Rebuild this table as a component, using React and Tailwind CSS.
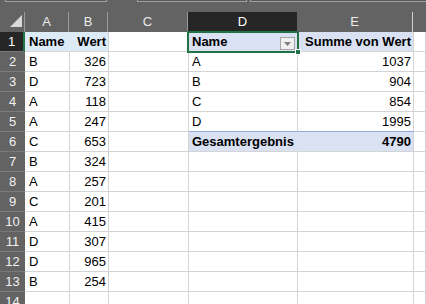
const rows = [
  { n: 1, a: 'Name', b: 'Wert', d: 'Name', e: 'Summe von Wert' },
  { n: 2, a: 'B', b: '326', d: 'A', e: '1037' },
  { n: 3, a: 'D', b: '723', d: 'B', e: '904' },
  { n: 4, a: 'A', b: '118', d: 'C', e: '854' },
  { n: 5, a: 'A', b: '247', d: 'D', e: '1995' },
  { n: 6, a: 'C', b: '653', d: 'Gesamtergebnis', e: '4790' },
  { n: 7, a: 'B', b: '324' },
  { n: 8, a: 'A', b: '257' },
  { n: 9, a: 'C', b: '201' },
  { n: 10, a: 'A', b: '415' },
  { n: 11, a: 'D', b: '307' },
  { n: 12, a: 'D', b: '965' },
  { n: 13, a: 'B', b: '254' },
  { n: 14 },
]

const cell = 'h-full border-r border-b border-[#d4d4d4] leading-[19px] whitespace-nowrap overflow-hidden'

function Row({ r }) {
  const head = r.n === 1
  const pivotHead = r.n === 1
  const pivotTotal = r.n === 6
  const beforeTotal = r.n === 5
  return (
    <div className="flex h-[20px]">
      {/* row header */}
      <div
        className={
          head
            ? 'w-[25px] h-full bg-[#262626] text-white text-center leading-[19px] border-r-2 border-r-[#217346] border-b border-b-[#7a7a7a]'
            : 'w-[25px] h-full bg-[#636363] text-[#f2f2f2] text-center leading-[19px] border-b border-b-[#7a7a7a]'
        }
      >
        {r.n}
      </div>
      <div className={`${cell} w-[45px] pl-[4px] ${head ? 'bg-[#ddebf7] font-bold border-r-[#ddebf7]' : ''}`}>{r.a}</div>
      <div className={`${cell} w-[39px] pr-[2px] text-right ${head ? 'bg-[#ddebf7] font-bold' : ''}`}>{r.b}</div>
      <div className={`${cell} w-[80px]`} />
      <div
        className={`${cell} relative w-[109px] pl-[3px] ${
          pivotHead || pivotTotal ? 'bg-[#d9e1f2] font-bold border-r-[#d9e1f2]' : ''
        } ${beforeTotal ? 'border-b-[#8ea9db]' : ''}`}
      >
        {r.d}
        {pivotHead && (
          <div className="absolute right-[2px] top-[5px] w-[15px] h-[13px] bg-[#f0f0f0] border border-[#a6a6a6] flex items-center justify-center">
            <svg width="7" height="4" viewBox="0 0 7 4">
              <polygon points="0,0 7,0 3.5,4" fill="#7f7f7f" />
            </svg>
          </div>
        )}
      </div>
      <div
        className={`${cell} w-[116px] pr-[2px] text-right ${
          pivotHead || pivotTotal ? 'bg-[#d9e1f2] font-bold' : ''
        } ${beforeTotal ? 'border-b-[#8ea9db]' : ''}`}
      >
        {r.e}
      </div>
      <div className={`${cell} flex-1`} />
    </div>
  )
}

export default function App() {
  return (
    <div className="w-[426px] h-[304px] overflow-hidden bg-white relative text-[13px] text-black font-['Liberation_Sans',Arial,sans-serif]">
      {/* top strip */}
      <div className="h-[12px] bg-[#636363] flex items-start">
        <div className="ml-[5px] w-[102px] h-[2px] bg-[#585858] border-x border-b border-[#a0a0a0]" />
        <div className="ml-[30px] w-[110px] h-[2px] bg-[#585858] border-x border-b border-[#a0a0a0]" />
        <div className="ml-[3px] flex-1 h-[2px] bg-[#585858] border-l border-b border-[#a0a0a0]" />
      </div>

      {/* column headers */}
      <div className="flex h-[20px] bg-[#636363] text-[#ececec] leading-[20px] text-center">
        <div className="w-[25px] h-full border-r border-[#9a9a9a]">
          <svg width="24" height="20" viewBox="0 0 24 20">
            <polygon points="22,3 22,15 10,15" fill="#d9d9d9" />
          </svg>
        </div>
        <div className="w-[44px] h-full border-r border-[#9a9a9a]">A</div>
        <div className="w-[39px] h-full border-r border-[#9a9a9a]">B</div>
        <div className="w-[80px] h-full border-r border-[#9a9a9a]">C</div>
        <div className="w-[109px] h-full bg-[#262626] text-white">D</div>
        <div className="w-[116px] h-full border-r border-[#d0d0d0]">E</div>
        <div className="flex-1 h-full" />
      </div>

      {rows.map((r) => (
        <Row key={r.n} r={r} />
      ))}

      {/* selection on D1 */}
      <div className="absolute left-[187px] top-[31px] w-[112px] h-[22px] border-2 border-[#217346] pointer-events-none">
        <div className="absolute right-[-4px] bottom-[-4px] w-[6px] h-[6px] bg-[#217346] border border-white" />
      </div>
    </div>
  )
}
